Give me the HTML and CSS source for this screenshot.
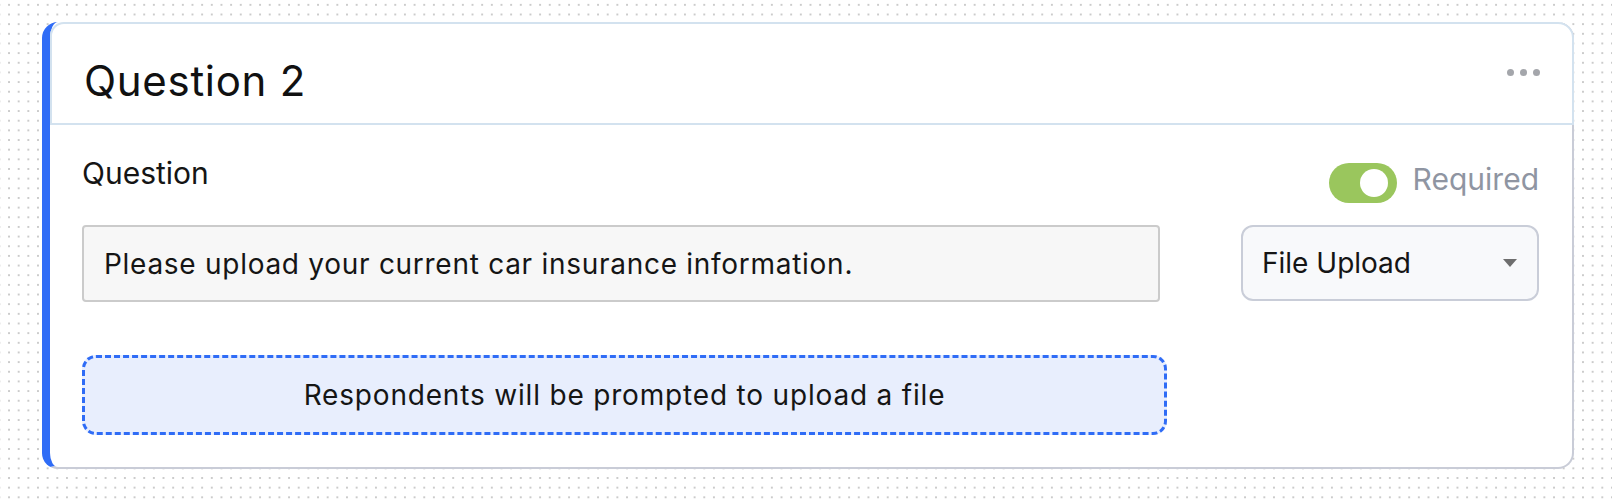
FILE: index.html
```html
<!DOCTYPE html>
<html lang="en">
<head>
<meta charset="utf-8">
<title>Question 2</title>
<link rel="stylesheet" href="styles.css">
</head>
<body>
  <div class="card">
    <div class="card-head">
      <h2 class="title">Question 2</h2>
      <div class="more"><span></span><span></span><span></span></div>
    </div>
    <div class="card-body">
      <div class="row-top">
        <span class="label">Question</span>
        <div class="req">
          <span class="toggle"><span class="knob"></span></span>
          <span class="req-text">Required</span>
        </div>
      </div>
      <div class="row-mid">
        <div class="input">Please upload your current car insurance information.</div>
        <div class="select"><span>File Upload</span><span class="caret"></span></div>
      </div>
      <div class="upload">Respondents will be prompted to upload a file</div>
    </div>
  </div>
</body>
</html>
```
FILE: styles.css
```css
html, body {
  margin: 0;
  height: 100%;
}
body {
  box-sizing: border-box;
  padding: 22px 0 0 42px;
  background-color: #ffffff;
  background-image: radial-gradient(circle at center, #cbcbcb 0.8px, rgba(255,255,255,0) 1.4px);
  background-size: 9.67px 9.67px;
  background-position: 4.2px 0;
  font-family: Inter, "Noto Sans", sans-serif;
  color: #151515;
}
.card {
  box-sizing: border-box;
  width: 1532px;
  height: 447px;
  background: #ffffff;
  border-left: 8px solid #2f6cf6;
  border-right: 2px solid #c9ccd7;
  border-bottom: 2px solid #c9ccd7;
  border-radius: 16px;
}
.card-head {
  box-sizing: border-box;
  height: 103px;
  margin-right: -2px;
  background: #ffffff;
  border: 2px solid #d3e2ef;
  border-radius: 14px 16px 0 0;
  display: flex;
  align-items: center;
  padding: 0 32px 0 32px;
}
.title {
  margin: 14px 0 0 0;
  font-size: 42px;
  line-height: 51px;
  font-weight: 400;
  letter-spacing: 0.7px;
  color: #111111;
}
.more {
  margin-left: auto;
  margin-top: -2px;
  display: flex;
  gap: 6px;
}
.more span {
  width: 7px;
  height: 7px;
  border-radius: 50%;
  background: #a4a6ab;
}
.card-body {
  padding: 30px 33px 0 32px;
}
.row-top {
  display: flex;
  justify-content: space-between;
  align-items: flex-start;
  height: 70px;
}
.label {
  font-size: 30px;
  line-height: 36px;
}
.req {
  display: flex;
  align-items: flex-start;
  gap: 16px;
}
.toggle {
  box-sizing: border-box;
  margin-top: 8px;
  width: 68px;
  height: 40px;
  border-radius: 20px;
  background: #9ac65d;
  display: flex;
  align-items: center;
  justify-content: flex-end;
  padding-right: 9px;
}
.knob {
  width: 28px;
  height: 28px;
  border-radius: 50%;
  background: #ffffff;
}
.req-text {
  margin-top: 6px;
  font-size: 30px;
  line-height: 36px;
  color: #8f95a2;
}
.row-mid {
  display: flex;
  justify-content: space-between;
}
.input {
  box-sizing: border-box;
  width: 1078px;
  height: 77px;
  border: 2px solid #cbcbcb;
  border-radius: 4px;
  background: #f7f7f7;
  font-size: 28px;
  letter-spacing: 0.72px;
  display: flex;
  align-items: center;
  padding-left: 20px;
  color: #151515;
}
.select {
  box-sizing: border-box;
  width: 298px;
  height: 76px;
  border: 2px solid #c9cdd8;
  border-radius: 12px;
  background: #f8f9fb;
  display: flex;
  align-items: center;
  justify-content: space-between;
  padding: 0 20px 0 19px;
  font-size: 28px;
}
.caret {
  width: 0;
  height: 0;
  border-left: 7.5px solid transparent;
  border-right: 7.5px solid transparent;
  border-top: 8px solid #6e6e6e;
}
.upload {
  box-sizing: border-box;
  margin-top: 53px;
  width: 1085px;
  height: 80px;
  border: 3px dashed #2f6cf6;
  border-radius: 14px;
  background: #e8eefd;
  display: flex;
  align-items: center;
  justify-content: center;
  font-size: 28px;
  letter-spacing: 0.82px;
}
```
